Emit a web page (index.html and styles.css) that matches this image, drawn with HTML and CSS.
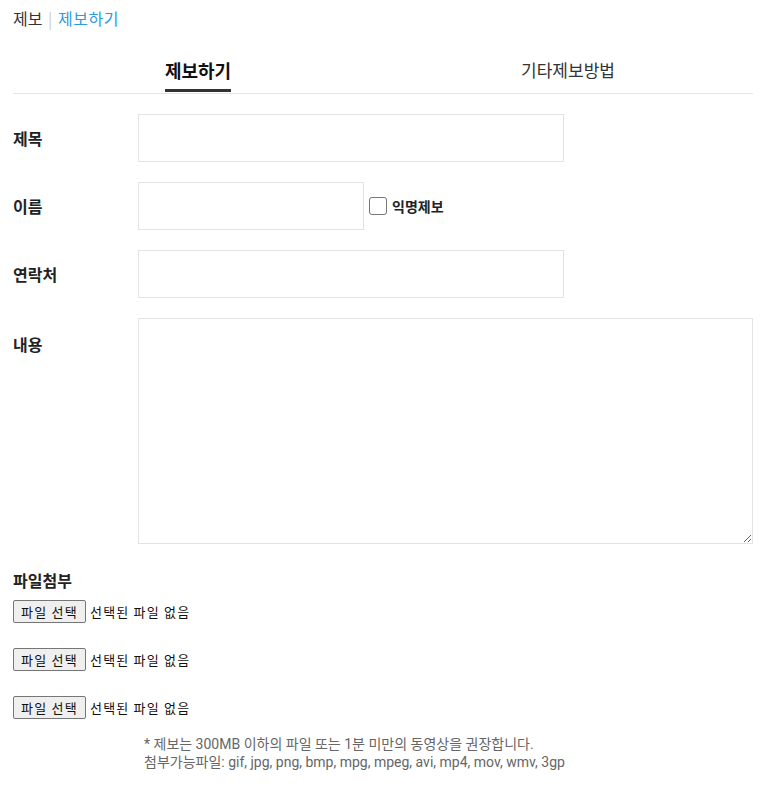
FILE: index.html
```html
<!DOCTYPE html>
<html>
  <head>
    <meta charset="utf-8">
    <link rel="stylesheet" href="styles.css">
  </head>
  <body>
    <main class="wrap">
      <nav class="crumbs">
        <span>제보</span>
        <span class="sep">|</span>
        <a class="crumb-now" href="#">제보하기</a>
      </nav>

      <ul class="tabs">
        <li class="tab active"><a href="#"><span>제보하기</span></a></li>
        <li class="tab"><a href="#"><span>기타제보방법</span></a></li>
      </ul>

      <form class="report-form">
        <div class="row">
          <label class="row-label" for="title">제목</label>
          <input class="field wide" id="title" type="text">
        </div>
        <div class="row">
          <label class="row-label" for="name">이름</label>
          <div class="name-line">
            <input class="field short" id="name" type="text">
            <label class="anon">
              <input class="check" type="checkbox">
              <span>익명제보</span>
            </label>
          </div>
        </div>
        <div class="row">
          <label class="row-label" for="phone">연락처</label>
          <input class="field wide" id="phone" type="text">
        </div>
        <div class="row">
          <label class="row-label top" for="body">내용</label>
          <textarea class="field area" id="body"></textarea>
        </div>

        <div class="files">
          <h4 class="files-title">파일첨부</h4>
          <div class="file-row">
            <label class="file-btn">파일 선택<input type="file"></label>
            <span class="file-name">선택된 파일 없음</span>
          </div>
          <div class="file-row">
            <label class="file-btn">파일 선택<input type="file"></label>
            <span class="file-name">선택된 파일 없음</span>
          </div>
          <div class="file-row">
            <label class="file-btn">파일 선택<input type="file"></label>
            <span class="file-name">선택된 파일 없음</span>
          </div>
          <p class="note">
            * 제보는 300MB 이하의 파일 또는 1분 미만의 동영상을 권장합니다.<br>
            첨부가능파일: gif, jpg, png, bmp, mpg, mpeg, avi, mp4, mov, wmv, 3gp
          </p>
        </div>
      </form>
    </main>
  </body>
</html>
```

FILE: styles.css
```css
* {
  margin: 0;
  padding: 0;
  box-sizing: border-box;
}

body {
  font-family: "Noto Sans CJK KR", "Noto Sans", sans-serif;
  font-size: 16px;
  color: #222;
  background: #fff;
}

a {
  color: inherit;
  text-decoration: none;
}

ul {
  list-style: none;
}

.wrap {
  width: 740px;
  margin-left: 13px;
  padding-top: 6px;
}

/* breadcrumb */
.crumbs {
  font-size: 16px;
  line-height: 24px;
  color: #333;
}

.crumbs .sep {
  color: #ccc;
  margin: 0 2px;
}

.crumb-now {
  color: #2b9be0;
  letter-spacing: 0.5px;
}

/* tabs */
.tabs {
  display: grid;
  grid-template-columns: 1fr 1fr;
  margin-top: 27px;
  border-bottom: 1px solid #e5e5e5;
}

.tab {
  text-align: center;
  font-size: 17px;
  color: #333;
}

.tab a {
  display: inline-block;
}

.tab span {
  display: inline-block;
  line-height: 26px;
  padding-bottom: 6px;
  border-bottom: 3px solid transparent;
  margin-bottom: 1px;
}

.tab.active span {
  font-size: 18px;
  font-weight: bold;
  color: #111;
  border-bottom-color: #333;
}

/* form */
.report-form {
  margin-top: 20px;
}

.row {
  display: grid;
  grid-template-columns: 125px 1fr;
  align-items: center;
  margin-bottom: 20px;
}

.row-label {
  font-weight: bold;
  font-size: 16px;
}

.row-label.top {
  align-self: start;
  padding-top: 14px;
}

.field {
  display: block;
  height: 48px;
  border: 1px solid #e3e3e3;
  font-family: inherit;
  font-size: 14px;
  padding: 0 10px;
  outline: none;
}

.field.wide {
  width: 426px;
}

.field.short {
  width: 226px;
}

.field.area {
  width: 615px;
  height: 226px;
  padding: 10px;
}

.name-line {
  display: flex;
  align-items: center;
}

.anon {
  display: flex;
  align-items: center;
  margin-left: 5px;
  font-size: 14px;
  font-weight: bold;
}

.check {
  appearance: none;
  width: 18px;
  height: 18px;
  border: 1px solid #767676;
  border-radius: 3px;
  background: #fff;
  margin-right: 5px;
}

/* attachments */
.files {
  margin-top: 4px;
}

.files-title {
  font-size: 16px;
  line-height: 20px;
  margin-top: 26px;
  margin-bottom: 10px;
}

.file-row {
  display: flex;
  align-items: center;
  font-size: 13px;
  letter-spacing: 1.2px;
  margin-bottom: 25px;
}

.file-row:last-of-type {
  margin-bottom: 0;
}

.file-btn {
  display: inline-block;
  width: 73px;
  height: 23px;
  line-height: 21px;
  text-align: center;
  background: #efefef;
  border: 1px solid #767676;
  border-radius: 2px;
  color: #111;
}

.file-btn input {
  display: none;
}

.file-name {
  margin-left: 4px;
  color: #111;
}

.note {
  margin-top: 16px;
  margin-left: 131px;
  font-family: Roboto, "Noto Sans CJK KR", sans-serif;
  font-size: 14px;
  line-height: 18px;
  color: #666;
}
```
